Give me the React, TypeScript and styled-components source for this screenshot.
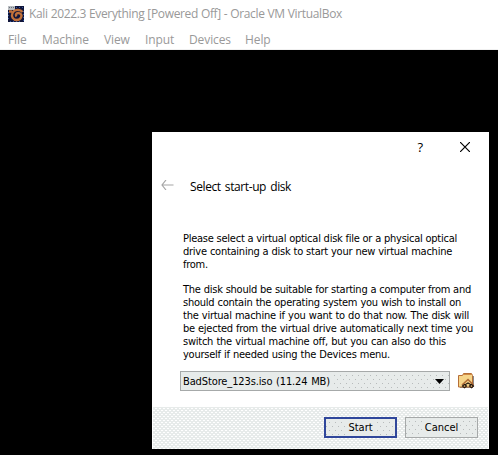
import React from 'react';
import styled, { createGlobalStyle } from 'styled-components';

const Global = createGlobalStyle`
  * { box-sizing: border-box; }
  body { margin: 0; background: #000; overflow: hidden; }
`;
const Screen = styled.div`
  width: 498px; height: 455px; background: #000;
  display: flex; flex-direction: column;
  font-family: "Open Sans", "Noto Sans", sans-serif; font-size: 12px;
`;
const Chrome = styled.header`
  height: 50px; flex: none; background: #fff; color: #999;
  border-bottom: 1px solid #f0f0f0;
`;
const TitleBar = styled.div`
  height: 27px; padding: 0 0 0 8px; display: flex; align-items: center; gap: 5px;
`;
const MenuBar = styled.nav`
  display: flex; height: 22px; align-items: center; padding: 2px 0 0 8px;
  letter-spacing: -0.1px;
`;
const MenuItem = styled.div<{ $slot: number }>`
  width: ${p => p.$slot}px; flex: none;
`;
const Fit = styled.span<{ $w: number; $ls?: number }>`
  display: block; width: ${p => p.$w}px; white-space: nowrap;
  text-align: justify; text-align-last: justify; letter-spacing: ${p => p.$ls ?? 0}px;
`;
const Dialog = styled.section`
  width: 337px; height: 317px; margin: 82px 0 0 152px; background: #fff; color: #000;
  display: flex; flex-direction: column;
`;
const Controls = styled.div`
  height: 30px; display: flex; justify-content: flex-end; align-items: center;
  padding-right: 19px; gap: 37px; font-size: 13px;
  svg { display: block; }
`;
const Heading = styled.div`
  height: 48px; padding: 0 0 0 9px; display: flex; align-items: center; gap: 16px;
  svg { margin-bottom: 2px; }
`;
const Copy = styled.div`
  height: 161px; padding: 22px 0 0 31px;
  font: 11px/13px "DejaVu Sans Condensed", "DejaVu Sans", sans-serif;
  font-stretch: condensed;
`;
const Para = styled.div`
  margin-bottom: 12px;
`;
const PickerRow = styled.div`
  display: flex; align-items: center; padding-left: 28px; gap: 8px; height: 20px;
`;
const Stippled = styled.div`
  background-color: #e7ebea;
  background-image: conic-gradient(from 0deg at 1px 1px, transparent 75%, #b8bcbc 0),
    conic-gradient(from 0deg at 1px 1px, transparent 75%, #b8bcbc 0);
  background-size: 6px 8px, 6px 8px;
  background-position: 3px 3px, 6px 7px;
`;
const Picker = styled(Stippled)`
  width: 270px; height: 20px; border: 1px solid #a6a9a9;
  display: flex; align-items: center; justify-content: space-between; padding: 0 5px 0 0;
  font: 11px "DejaVu Sans Condensed", "DejaVu Sans", sans-serif; font-stretch: condensed;
`;
const Value = styled.div`
  height: 18px; padding: 0 4px 0 2px; line-height: 19px; background: #e7ebea;
`;
const Footer = styled.footer`
  margin: auto 1px 0; height: 42px; padding: 10px 10px 0 0;
  display: flex; justify-content: flex-end; gap: 8px;
  background-color: #e7ebea;
  background-image: conic-gradient(from 0deg at 2px 1px, transparent 75%, #fff 0),
    conic-gradient(from 0deg at 2px 1px, transparent 75%, #fff 0);
  background-size: 4px 4px, 4px 4px;
  background-position: 0 3px, 2px 5px;
`;
const Button = styled(Stippled)<{ $primary?: boolean }>`
  width: 73px; height: 21px;
  border: ${p => (p.$primary ? '2px solid #30479b' : '1px solid #a6a9a9')};
  display: flex; align-items: center; justify-content: center;
  font: 11px "DejaVu Sans Condensed", "DejaVu Sans", sans-serif; font-stretch: condensed;
`;
const Label = styled.span`
  padding: 0 2px; line-height: 14px; margin-top: 1px; background: #e7ebea;
`;

const menu: [string, number][] = [
  ['File', 34], ['Machine', 62], ['View', 41],
  ['Input', 44], ['Devices', 56], ['Help', 40],
];
const first: [string, number][] = [
  ['Please select a virtual optical disk file or a physical optical', 274],
  ['drive containing a disk to start your new virtual machine', 269],
  ['from.', 26],
];
const second: [string, number][] = [
  ['The disk should be suitable for starting a computer from and', 288],
  ['should contain the operating system you wish to install on', 278],
  ['the virtual machine if you want to do that now. The disk will', 286],
  ['be ejected from the virtual drive automatically next time you', 290],
  ['switch the virtual machine off, but you can also do this', 263],
  ['yourself if needed using the Devices menu.', 207],
];

const AppIcon = () => (
  <svg width="16" height="16" viewBox="0 0 16 16">
    <path fill="#10153a" d="M0 0h16v16H0z" />
    <path fill="none" stroke="#34559c" strokeDasharray="1 2" d="M8 1.500h8M.5 6v9M15.500 5v10M2 15.500h11" />
    <path fill="#b9bdc1" d="M0 0h7v4H0z" />
    <path stroke="#6c737c" strokeDasharray="1 1" d="M1 1.500h5" />
    <path fill="none" stroke="#c0703a" strokeWidth="2.300" d="M1 5.500h3M14.500 6C12 2.500 6 3.500 4.500 7S5 14 9 14s6-5 3-6.500-5 1-3.500 3" />
  </svg>
);
const FolderIcon = () => (
  <svg width="17" height="18" viewBox="0 0 17 18">
    <path fill="#888" d="M15 4h1v11h-1zM2 15h13v1H2z" />
    <path fill="#f6d58a" stroke="#b66f37" d="M.5 3.500h4l1-2h8l1 2v11.500H.5z" />
    <path stroke="#cf8a45" d="M5 2.500h9" />
    <path fill="none" stroke="#b06a34" strokeWidth="1.600" d="M4 13l6-5.500 5.500 5.500" />
    <path fill="none" stroke="#24160e" strokeWidth="1.100" d="M4.500 14l2-1.500 2 1.500-2 1.800zM11.500 14l2-1.500 2 1.500-2 1.800zM7.500 12.500L10 11l2.500 1.500" />
  </svg>
);

export default function App() {
  return (
    <Screen>
      <Global />
      <Chrome>
        <TitleBar>
          <AppIcon />
          <Fit $w={313} $ls={-0.34}>Kali 2022.3 Everything [Powered Off] - Oracle VM VirtualBox</Fit>
        </TitleBar>
        <MenuBar>
          {menu.map(([t, slot]) => <MenuItem key={t} $slot={slot}>{t}</MenuItem>)}
        </MenuBar>
      </Chrome>
      <Dialog>
        <Controls>
          <span>?</span>
          <svg width="10" height="10" viewBox="0 0 10 10"><path d="M0 0l10 10M10 0L0 10" stroke="#000" strokeWidth="1.200" /></svg>
        </Controls>
        <Heading>
          <svg width="13" height="10" viewBox="0 0 13 10"><path d="M5 0L1 5l4 5M1 5h11.500" fill="none" stroke="#a5a5a5" strokeWidth="1.200" /></svg>
          <Fit $w={101} $ls={-0.4}>Select start-up disk</Fit>
        </Heading>
        <Copy>
          <Para>{first.map(([t, w]) => <Fit key={t} $w={w} $ls={-0.25}>{t}</Fit>)}</Para>
          <Para>{second.map(([t, w]) => <Fit key={t} $w={w} $ls={-0.25}>{t}</Fit>)}</Para>
        </Copy>
        <PickerRow>
          <Picker>
            <Value><Fit $w={147} $ls={-0.12}>BadStore_123s.iso (11.24 MB)</Fit></Value>
            <svg width="9" height="5" viewBox="0 0 9 5"><path d="M0 0h9L4.500 5z" /></svg>
          </Picker>
          <FolderIcon />
        </PickerRow>
        <Footer>
          <Button $primary><Label>Start</Label></Button>
          <Button><Label>Cancel</Label></Button>
        </Footer>
      </Dialog>
    </Screen>
  );
}
